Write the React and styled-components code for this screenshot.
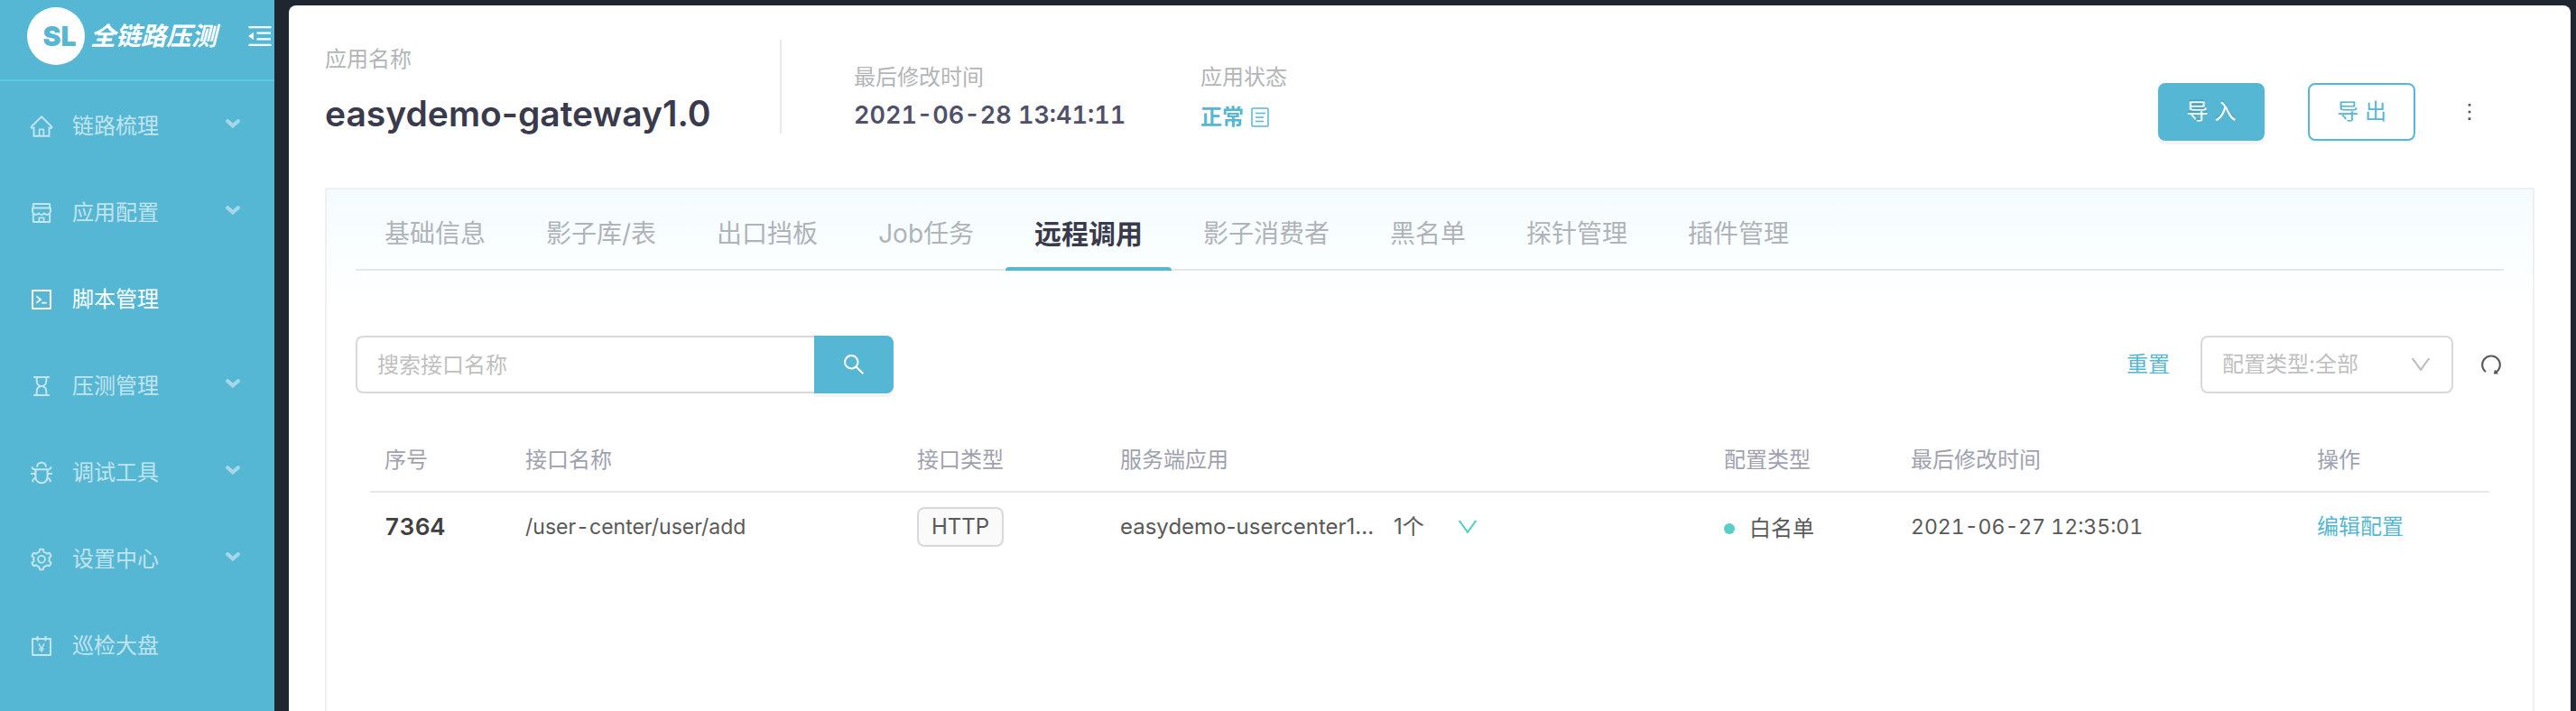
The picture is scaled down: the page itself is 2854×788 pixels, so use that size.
import React from "react";
import styled, { createGlobalStyle } from "styled-components";
import {
  AiOutlineHome,
  AiOutlineShop,
  AiOutlineCode,
  AiOutlineHourglass,
  AiOutlineBug,
  AiOutlineSetting,
  AiOutlineAccountBook,
  AiOutlineMenuFold,
  AiOutlineMore,
  AiOutlineSearch,
  AiOutlineDown,
  AiOutlineRedo,
} from "react-icons/ai";

const brand = "#56b7d4";

const GlobalStyle = createGlobalStyle`
  *, *::before, *::after { box-sizing: border-box; }
  body {
    margin: 0;
    background: #1f2630;
    color: #595959;
    font: 24px/36px Inter, "Noto Sans CJK SC", sans-serif;
  }
  button, input, select { font: inherit; color: inherit; margin: 0; }
  button { cursor: pointer; }
  a { color: ${brand}; text-decoration: none; }
  svg { display: block; flex: none; }
`;

const Layout = styled.div`
  display: flex;
  min-height: 100vh;
`;

const Sidebar = styled.aside`
  flex: none;
  width: 304px;
  background: ${brand};
`;

const Brand = styled.div`
  display: flex;
  align-items: center;
  gap: 6px;
  height: 90px;
  padding: 0 0 8px 30px;
  border-bottom: 2px solid #55c8e3;
  color: #fff;
`;

const Logo = styled.span`
  display: flex;
  align-items: center;
  justify-content: center;
  width: 64px;
  height: 64px;
  padding-left: 8px;
  border-radius: 50%;
  background: #fff;
  color: ${brand};
  font-size: 30px;
  font-weight: 900;
`;

const BrandName = styled.span`
  flex: 1;
  white-space: nowrap;
  font-size: 28px;
  font-weight: 700;
  font-style: italic;
`;

const PlainButton = styled.button`
  display: flex;
  align-items: center;
  padding: 0;
  border: 0;
  background: none;
`;

const Menu = styled.nav`
  padding-top: 2px;
`;

const MenuItem = styled.a`
  display: flex;
  align-items: center;
  gap: 20px;
  height: 96px;
  padding: 0 38px 0 32px;
  color: ${(p) => (p.$active ? "#fff" : "rgba(255, 255, 255, 0.65)")};
`;

const MenuLabel = styled.span`
  flex: 1;
`;

const MenuArrow = styled.svg`
  margin-bottom: 6px;
  opacity: 0.7;
`;

const Page = styled.main`
  flex: 1;
  min-width: 0;
  display: flex;
  flex-direction: column;
  margin: 6px 6px 0 16px;
  padding: 38px 40px 0;
  border-radius: 8px 8px 0 0;
  background: #fff;
`;

const Header = styled.header`
  display: flex;
  align-items: flex-start;
  height: 104px;
`;

const AppTitle = styled.div`
  display: flex;
  flex-direction: column;
  gap: 14px;
  height: 104px;
  min-width: 506px;
  padding-top: 4px;
  border-right: 2px solid #e8e8e8;
`;

const Label = styled.span`
  color: #b3b5b8;
`;

const Title = styled.h1`
  margin: 0;
  color: #3a3a4d;
  font-size: 39px;
  line-height: 56px;
  font-weight: 600;
`;

const Meta = styled.div`
  display: flex;
  flex-direction: column;
  gap: 8px;
  min-width: ${(p) => p.$width};
  padding-top: 24px;
`;

const MetaList = styled.div`
  display: flex;
  flex: 1;
  padding-left: 80px;
`;

const MetaValue = styled.span`
  color: #50506a;
  font-size: 27px;
  line-height: 32px;
  font-weight: 600;
  font-variant-numeric: tabular-nums;
`;

const Status = styled.span`
  display: flex;
  align-items: center;
  gap: 8px;
  color: ${brand};
  font-weight: 700;
`;

const Actions = styled.div`
  display: flex;
  align-items: center;
  gap: 46px;
  padding: 48px 58px 0 0;
`;

const ButtonGroup = styled.div`
  display: flex;
  gap: 48px;
`;

const Button = styled.button`
  height: 64px;
  padding: 0 30px;
  border: 2px solid ${brand};
  border-radius: 8px;
  background: ${(p) => (p.$primary ? brand : "#fff")};
  color: ${(p) => (p.$primary ? "#fff" : brand)};
  box-shadow: 0 4px 0 rgba(0, 0, 0, ${(p) => (p.$primary ? 0.045 : 0.016)});
  text-shadow: ${(p) => (p.$primary ? "0 -2px 0 rgba(0, 0, 0, 0.12)" : "none")};
`;

const Panel = styled.section`
  flex: 1;
  margin-top: 60px;
  padding: 0 32px;
  border: 2px solid #eef0f4;
  border-bottom: 0;
  background: linear-gradient(#f4fbff, #f9feff 60px, #fff 130px);
`;

const Tabs = styled.div`
  display: flex;
  gap: 3px;
  height: 90px;
  border-bottom: 2px solid #e6e7e9;
`;

const Tab = styled.button`
  position: relative;
  height: 90px;
  padding: 8px 32px 0;
  border: 0;
  background: none;
  white-space: nowrap;
  color: ${(p) => (p.$active ? "#3a3a4d" : "#b0b3ba")};
  font-size: ${(p) => (p.$active ? 30 : 28)}px;
  font-weight: ${(p) => (p.$active ? 600 : 400)};

  &::after {
    content: "";
    position: absolute;
    inset: auto 0 0;
    height: 4px;
    border-radius: 4px 4px 0 0;
    background: ${(p) => (p.$active ? brand : "transparent")};
  }
`;

const Toolbar = styled.div`
  display: flex;
  align-items: center;
  justify-content: space-between;
  padding: 72px 0 38px;
`;

const Search = styled.form`
  display: flex;
  width: 596px;
`;

const SearchInput = styled.input`
  flex: 1;
  min-width: 0;
  height: 64px;
  padding: 0 22px;
  border: 2px solid #d9d9d9;
  border-right: 0;
  border-radius: 8px 0 0 8px;
  outline: none;
  background: #fff;

  &::placeholder { color: #bfbfbf; }
`;

const SearchButton = styled.button`
  display: flex;
  align-items: center;
  justify-content: center;
  width: 88px;
  height: 64px;
  border: 0;
  border-radius: 0 8px 8px 0;
  background: ${brand};
  color: #fff;
  box-shadow: 0 4px 0 rgba(0, 0, 0, 0.045);
`;

const Filters = styled.div`
  display: flex;
  align-items: center;
  gap: 28px;
`;

const ResetLink = styled.a`
  padding-right: 6px;
`;

const SelectBox = styled.label`
  display: grid;
  align-items: center;
  width: 280px;
  color: #bfbfbf;

  > * { grid-area: 1 / 1; }
  > svg { justify-self: end; margin-right: 22px; pointer-events: none; }
`;

const Select = styled.select`
  appearance: none;
  width: 100%;
  height: 64px;
  padding: 0 60px 0 22px;
  border: 2px solid #d9d9d9;
  border-radius: 8px;
  background: #fff;
`;

const Table = styled.table`
  width: calc(100% - 32px);
  margin: 0 16px;
  table-layout: fixed;
  border-collapse: separate;
  border-spacing: 0;
`;

const Th = styled.th`
  height: 72px;
  padding: 2px 16px 0;
  border-bottom: 2px solid #e8e8e8;
  color: #a0a1af;
  font-weight: 400;
  text-align: left;
`;

const Td = styled.td`
  height: 76px;
  padding: 0 16px;
  white-space: nowrap;
`;

const RowId = styled.strong`
  color: #404040;
  font-size: 26px;
  font-weight: 600;
  font-variant-numeric: tabular-nums;
`;

const DataText = styled.span`
  font-size: 23px;
  font-variant-numeric: tabular-nums;
`;

const Tag = styled.span`
  display: inline-block;
  padding: 2px 14px;
  border: 2px solid #d9d9d9;
  border-radius: 8px;
  background: #fafafa;
`;

const ServerApp = styled.div`
  display: flex;
  align-items: center;
`;

const Count = styled.span`
  margin: 0 34px 0 22px;
`;

const Expand = styled(PlainButton)`
  color: #5bcfc5;
`;

const ConfigType = styled.span`
  display: flex;
  align-items: center;
  gap: 16px;
  padding-top: 4px;

  &::before {
    content: "";
    width: 12px;
    height: 12px;
    border-radius: 50%;
    background: #5bcfc5;
  }
`;

const menu = [
  { label: "链路梳理", icon: AiOutlineHome, arrow: true },
  { label: "应用配置", icon: AiOutlineShop, arrow: true },
  { label: "脚本管理", icon: AiOutlineCode, active: true },
  { label: "压测管理", icon: AiOutlineHourglass, arrow: true },
  { label: "调试工具", icon: AiOutlineBug, arrow: true },
  { label: "设置中心", icon: AiOutlineSetting, arrow: true },
  { label: "巡检大盘", icon: AiOutlineAccountBook },
];

const tabs = [
  "基础信息",
  "影子库/表",
  "出口挡板",
  "Job任务",
  "远程调用",
  "影子消费者",
  "黑名单",
  "探针管理",
  "插件管理",
];

const columns = [
  ["序号", 156],
  ["接口名称", 434],
  ["接口类型", 225],
  ["服务端应用", 669],
  ["配置类型", 207],
  ["最后修改时间", 450],
  ["操作", 207],
];

function Chevron() {
  return (
    <MenuArrow width="16" height="10" viewBox="0 0 16 10" aria-hidden="true">
      <path
        d="M2.2 2.2 8 7.4l5.800-5.200"
        fill="none"
        stroke="currentColor"
        strokeWidth="4.200"
        strokeLinecap="round"
      />
    </MenuArrow>
  );
}

function DocIcon() {
  return (
    <svg width="20" height="24" viewBox="0 0 20 24" fill="none" stroke="currentColor" aria-hidden="true">
      <rect x="1" y="2" width="18" height="20" rx="1" strokeWidth="1.500" />
      <path d="M5 7.500h11M5 12h9M5 16.500h9" strokeWidth="1.500" />
    </svg>
  );
}

export default function App() {
  return (
    <>
      <GlobalStyle />
      <Layout>
        <Sidebar>
          <Brand>
            <Logo>SL</Logo>
            <BrandName>全链路压测</BrandName>
            <PlainButton type="button" aria-label="收起菜单">
              <AiOutlineMenuFold size={32} color="#fff" />
            </PlainButton>
          </Brand>
          <Menu>
            {menu.map(({ label, icon: Icon, arrow, active }) => (
              <MenuItem key={label} href="#" $active={active}>
                <Icon size={28} />
                <MenuLabel>{label}</MenuLabel>
                {arrow && <Chevron />}
              </MenuItem>
            ))}
          </Menu>
        </Sidebar>
        <Page>
          <Header>
            <AppTitle>
              <Label>应用名称</Label>
              <Title>easydemo-gateway1.0</Title>
            </AppTitle>
            <MetaList>
              <Meta $width="384px">
                <Label>最后修改时间</Label>
                <MetaValue>2021-06-28 13:41:11</MetaValue>
              </Meta>
              <Meta>
                <Label>应用状态</Label>
                <Status>
                  正常
                  <DocIcon />
                </Status>
              </Meta>
            </MetaList>
            <Actions>
              <ButtonGroup>
                <Button type="button" $primary>导 入</Button>
                <Button type="button">导 出</Button>
              </ButtonGroup>
              <PlainButton type="button" aria-label="更多">
                <AiOutlineMore size={28} />
              </PlainButton>
            </Actions>
          </Header>
          <Panel>
            <Tabs role="tablist">
              {tabs.map((name) => {
                const active = name === "远程调用";
                return (
                  <Tab key={name} type="button" role="tab" aria-selected={active} $active={active}>
                    {name}
                  </Tab>
                );
              })}
            </Tabs>
            <Toolbar>
              <Search onSubmit={(e) => e.preventDefault()}>
                <SearchInput type="text" placeholder="搜索接口名称" aria-label="搜索接口名称" />
                <SearchButton type="submit" aria-label="搜索">
                  <AiOutlineSearch size={28} />
                </SearchButton>
              </Search>
              <Filters>
                <ResetLink href="#">重置</ResetLink>
                <SelectBox>
                  <Select aria-label="配置类型">
                    <option>配置类型:全部</option>
                  </Select>
                  <AiOutlineDown size={28} />
                </SelectBox>
                <PlainButton type="button" aria-label="刷新">
                  <AiOutlineRedo size={28} />
                </PlainButton>
              </Filters>
            </Toolbar>
            <Table>
              <colgroup>
                {columns.map(([name, width]) => (
                  <col key={name} width={width} />
                ))}
              </colgroup>
              <thead>
                <tr>
                  {columns.map(([name]) => (
                    <Th key={name} scope="col">{name}</Th>
                  ))}
                </tr>
              </thead>
              <tbody>
                <tr>
                  <Td><RowId>7364</RowId></Td>
                  <Td><DataText>/user-center/user/add</DataText></Td>
                  <Td><Tag>HTTP</Tag></Td>
                  <Td>
                    <ServerApp>
                      <span>easydemo-usercenter1...</span>
                      <Count>1个</Count>
                      <Expand type="button" aria-label="展开">
                        <AiOutlineDown size={28} />
                      </Expand>
                    </ServerApp>
                  </Td>
                  <Td><ConfigType>白名单</ConfigType></Td>
                  <Td><DataText>2021-06-27 12:35:01</DataText></Td>
                  <Td><a href="#">编辑配置</a></Td>
                </tr>
              </tbody>
            </Table>
          </Panel>
        </Page>
      </Layout>
    </>
  );
}
